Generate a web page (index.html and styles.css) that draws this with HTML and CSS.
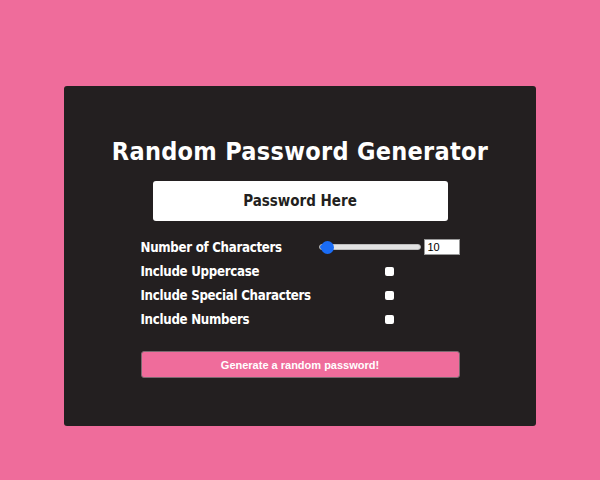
FILE: index.html
```
<!DOCTYPE html>
<html>
<head>
<meta charset="utf-8">
<link rel="stylesheet" href="styles.css">
</head>
<body>
<main class="card">
  <h1 class="title">Random Password Generator</h1>
  <div class="output">Password Here</div>
  <div class="options">
    <label class="opt-label">Number of Characters</label>
    <div class="opt-ctrl range-ctrl">
      <input class="range" type="range" min="8" max="128" value="10">
      <input class="num" type="text" value="10">
    </div>
    <label class="opt-label">Include Uppercase</label>
    <div class="opt-ctrl"><span class="check"></span></div>
    <label class="opt-label">Include Special Characters</label>
    <div class="opt-ctrl"><span class="check"></span></div>
    <label class="opt-label">Include Numbers</label>
    <div class="opt-ctrl"><span class="check"></span></div>
  </div>
  <button class="gen">Generate a random password!</button>
</main>
</body>
</html>
```
FILE: styles.css
```
html, body {
  margin: 0;
  padding: 0;
}
body {
  background: #ef6c9b;
  width: 600px;
  height: 480px;
  font-family: "DejaVu Sans Condensed", "DejaVu Sans", Verdana, sans-serif;
}
.card {
  box-sizing: border-box;
  width: 472px;
  height: 340px;
  margin: 86px auto 0;
  background: #231f20;
  border-radius: 3px;
  display: flex;
  flex-direction: column;
  align-items: center;
  padding-top: 51px;
}
.title {
  margin: 0;
  color: #fff;
  font-size: 25px;
  font-weight: bold;
  line-height: 30px;
  letter-spacing: 0.3px;
}
.output {
  margin-top: 14px;
  width: 295px;
  height: 40px;
  background: #fff;
  border-radius: 3px;
  display: flex;
  align-items: center;
  justify-content: center;
  font-weight: bold;
  font-size: 15px;
  color: #231f20;
}
.options {
  margin-top: 14px;
  width: 319px;
  display: grid;
  grid-template-columns: 178px 141px;
  grid-auto-rows: 24px;
}
.opt-label {
  color: #fff;
  font-weight: bold;
  font-size: 13.2px;
  letter-spacing: -0.3px;
  display: flex;
  align-items: center;
}
.opt-ctrl {
  display: flex;
  align-items: center;
  justify-content: center;
}
.range-ctrl {
  justify-content: space-between;
}
.range {
  -webkit-appearance: none;
  appearance: none;
  margin: 0;
  width: 102px;
  height: 6px;
  border-radius: 3px;
  background: linear-gradient(to right, #1a6cf5 0 8px, #e2e2e2 8px);
  border: 1px solid #bdbdbd;
  box-sizing: border-box;
}
.range::-webkit-slider-thumb {
  -webkit-appearance: none;
  width: 13px;
  height: 13px;
  border-radius: 50%;
  background: #1a6cf5;
  border: none;
}
.num {
  box-sizing: border-box;
  width: 36px;
  height: 16px;
  padding: 0 3px;
  border: 1px solid #999;
  font-family: "Liberation Sans", Arial, sans-serif;
  font-size: 11px;
  color: #000;
  background: #fff;
}
.check {
  width: 9px;
  height: 9px;
  background: #fff;
  border-radius: 2px;
  display: block;
}
.gen {
  margin-top: 20px;
  width: 319px;
  height: 27px;
  background: #ef6c9b;
  border: 1px solid #7a6a70;
  border-radius: 3px;
  color: #fff;
  font-family: "Liberation Sans", Arial, sans-serif;
  font-weight: bold;
  font-size: 11px;
}
```
